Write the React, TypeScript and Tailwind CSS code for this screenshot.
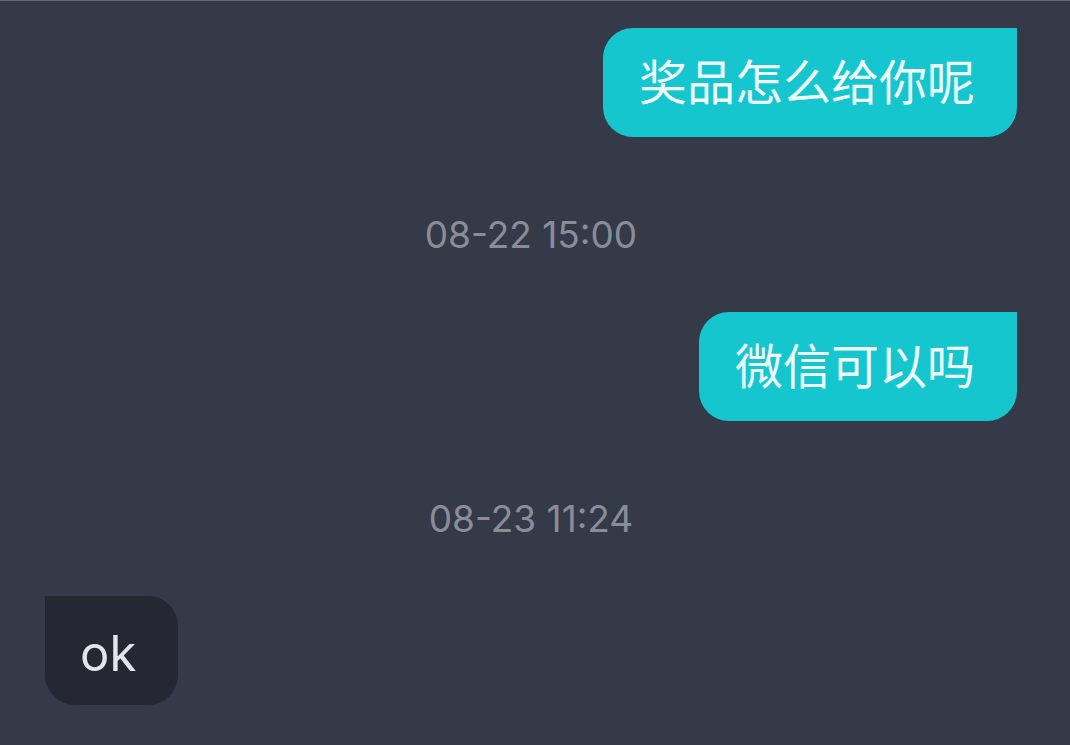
import React from "react";

const cjk = { fontFamily: '"Inter", "Noto Sans CJK SC", sans-serif' };

function Right({ text }: { text: string }) {
  return (
    <div className="flex justify-end">
      <div className="h-[109px] flex items-center pl-[36px] pr-[42px] bg-[#16c6ce] text-[#eefcfd] text-[48px] rounded-l-[30px] rounded-br-[30px] rounded-tr-none leading-none">
        {text}
      </div>
    </div>
  );
}

function Time({ text }: { text: string }) {
  return (
    <div className="mt-[78px] mb-[57px] h-[40px] leading-[40px] text-center text-[37px] text-[#8a8d97]">
      {text}
    </div>
  );
}

export default function App() {
  return (
    <div
      className="w-[1070px] h-[745px] bg-[#353a48] border-t border-[#6b6e78] pt-[27px] pl-[45px] pr-[53px] overflow-hidden"
      style={cjk}
    >
      <Right text="奖品怎么给你呢" />
      <Time text="08-22 15:00" />
      <Right text="微信可以吗" />
      <Time text="08-23 11:24" />
      <div className="flex justify-start">
        <div className="h-[109px] flex items-center pt-[5px] pl-[35px] pr-[42px] bg-[#252833] text-[#e4e5e8] text-[49px] rounded-r-[30px] rounded-bl-[30px] leading-none">
          ok
        </div>
      </div>
    </div>
  );
}
